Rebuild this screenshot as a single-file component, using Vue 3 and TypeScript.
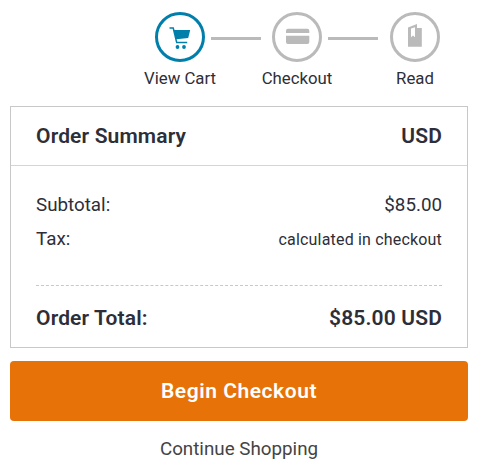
<script setup lang="ts">
interface Step {
  id: 'cart' | 'card' | 'book'
  label: string
  active: boolean
}

const steps: Step[] = [
  { id: 'cart', label: 'View Cart', active: true },
  { id: 'card', label: 'Checkout', active: false },
  { id: 'book', label: 'Read', active: false },
]
</script>

<template>
  <main class="page">
    <nav class="steps">
      <div v-for="step in steps" :key="step.id" class="step" :class="[step.id, { active: step.active }]">
        <span class="circle">
          <svg v-if="step.id === 'cart'" width="22" height="26" viewBox="0 -1 22 26" fill="currentColor">
            <path d="M0.5 2.2H4.8L5.5 5H21.2L19.2 12.9L7.6 14.2L8.3 16.8H18.2V18.2H7.1L3.6 3.7H0.5Z" />
            <circle cx="8.5" cy="22" r="1.9" />
            <circle cx="15" cy="22" r="1.9" />
          </svg>
          <svg v-else-if="step.id === 'card'" width="26" height="18" viewBox="0 0 26 18" fill="currentColor">
            <path d="M3.9 0.8H23.4Q25.3 0.8 25.3 2.7V4.9H2V2.7Q2 0.8 3.9 0.8Z" />
            <path d="M2 7.7H25.3V14.1Q25.3 16 23.4 16H3.9Q2 16 2 14.1Z" />
          </svg>
          <svg v-else width="14" height="26" viewBox="0 0 14 26" fill="currentColor">
            <path
              fill-rule="evenodd"
              d="M0 3.6L9 0V4H13.8V22.8H0ZM3 4.4V13.2L5 11.5L7 13.2V3.2Z"
            />
          </svg>
        </span>
        <span class="label">{{ step.label }}</span>
      </div>
    </nav>

    <section class="summary">
      <header class="row head"><span>Order Summary</span><span>USD</span></header>
      <div class="body">
        <div class="row line"><span>Subtotal:</span><span>$85.00</span></div>
        <div class="row line tax"><span>Tax:</span><span class="note">calculated in checkout</span></div>
        <div class="row total"><span>Order Total:</span><span>$85.00 USD</span></div>
      </div>
    </section>

    <button class="begin" type="button">Begin Checkout</button>
    <a class="continue">Continue Shopping</a>
  </main>
</template>

<style>
body {
  background: #fff;
}
</style>

<style scoped>
.page {
  box-sizing: border-box;
  width: 478px;
  height: 475px;
  padding: 12px 10px 0;
  font-family: Roboto, sans-serif;
  color: #2e2e38;
  overflow: hidden;
}
.steps {
  display: flex;
  height: 94px;
  padding-left: 145px;
}
.step {
  display: grid;
  grid-template-columns: 50px 50px;
  grid-template-rows: 50px 32px;
  column-gap: 6px;
  width: 117px;
  flex: none;
}
.step.card {
  width: 118px;
}
.step:not(:last-child)::after {
  content: '';
  grid-column: 2;
  grid-row: 1;
  align-self: center;
  height: 3px;
  margin-top: 3px;
  background: #bababa;
}
.circle {
  box-sizing: border-box;
  display: flex;
  align-items: center;
  justify-content: center;
  width: 50px;
  height: 50px;
  border: 3px solid #bababa;
  border-radius: 50%;
  color: #bababa;
}
.active .circle {
  border-color: #007fab;
  color: #007fab;
}
.label {
  grid-row: 2;
  grid-column: 1;
  justify-self: center;
  white-space: nowrap;
  font-size: 16.8px;
  line-height: 32px;
}
.summary {
  box-sizing: border-box;
  width: 458px;
  height: 242px;
  border: 1px solid #c8c8c8;
}
.row {
  display: flex;
  justify-content: space-between;
  align-items: center;
}
.head {
  height: 58px;
  padding: 0 25px;
  border-bottom: 1px solid #d5d5d5;
  font-size: 21px;
  font-weight: 600;
  letter-spacing: 0.15px;
}
.body {
  padding: 21px 25px 0;
}
.line {
  height: 35px;
  font-size: 18.8px;
  line-height: 34px;
}
.note {
  font-size: 16px;
  letter-spacing: 0.18px;
}
.tax {
  height: 34px;
  align-items: baseline;
}
.total {
  height: 63px;
  margin-top: 29px;
  border-top: 1px dashed #c8c8c8;
  font-size: 21px;
  font-weight: 600;
  letter-spacing: 0.15px;
}
.begin {
  display: block;
  width: 458px;
  height: 60px;
  margin-top: 13px;
  padding: 0;
  border: 0;
  border-radius: 4px;
  background: #e77208;
  color: #fff;
  font: 600 21px Roboto, sans-serif;
  letter-spacing: 0.55px;
}
.continue {
  display: block;
  margin-top: 12px;
  text-align: center;
  font-size: 18.8px;
  line-height: 32px;
  color: #444;
}
</style>
